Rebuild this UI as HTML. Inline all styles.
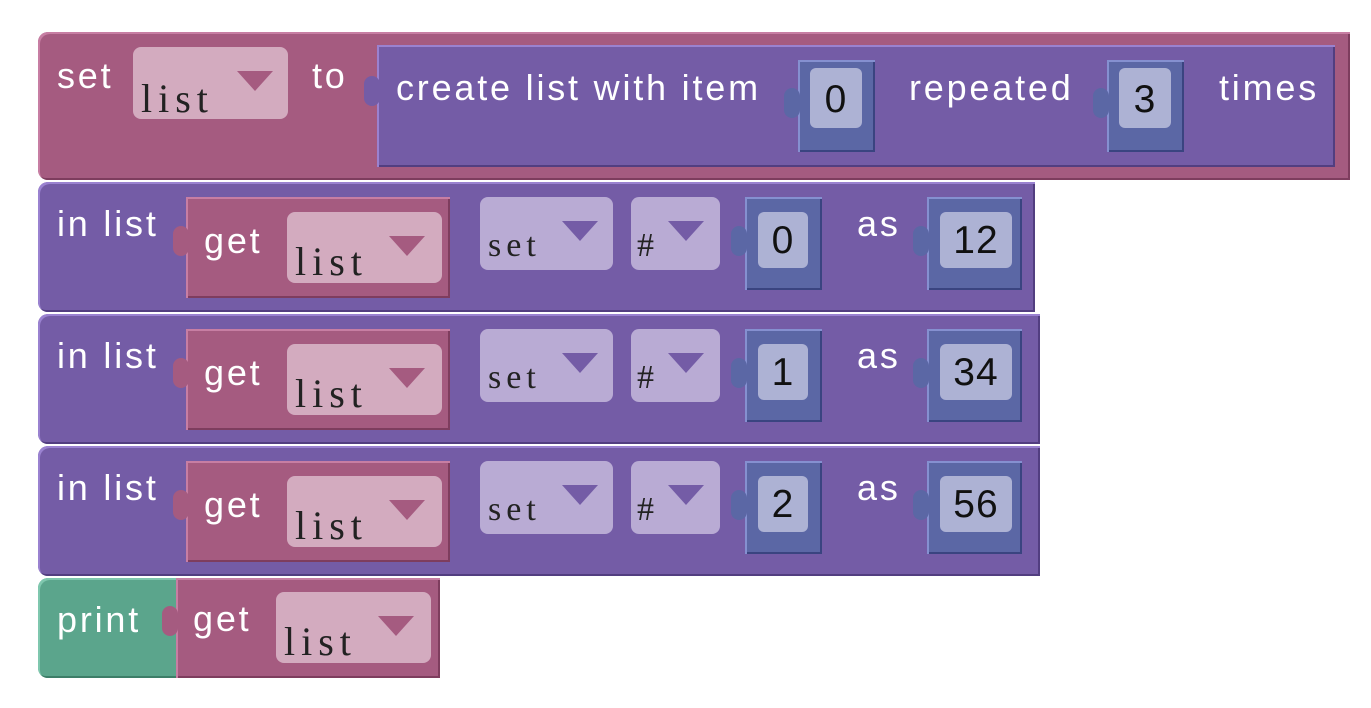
<!DOCTYPE html>
<html><head><meta charset="utf-8"><style>
body{margin:0;width:1371px;height:708px;background:#fff;position:relative;overflow:hidden;font-family:"Liberation Sans",sans-serif}
div,span{position:absolute;box-sizing:border-box}
.pk{background:#a55b80;box-shadow:inset 2px 2px 0 #c77ea3,inset -2px -2px 0 #7e3d5e}
.pu{background:#745ca6;box-shadow:inset 2px 2px 0 #9a82d0,inset -2px -2px 0 #523e80}
.gr{background:#5ba58c;box-shadow:inset 2px 2px 0 #7fc7ae,inset -2px -2px 0 #3d7e68}
.nb{background:#5b67a5;box-shadow:inset 2px 2px 0 #8590d0,inset -2px -2px 0 #3a4480}
.ni{background:#adb2d4;border-radius:6px}
.dp{background:#d3abbf;border-radius:8px}
.dv{background:#b9abd4;border-radius:8px}
.t{color:#fff;font-size:36px;letter-spacing:2.8px;line-height:1;white-space:nowrap}
.n{color:#111;font-size:39px;line-height:1;text-align:center;width:100%;letter-spacing:1px}
.s{font-family:"Liberation Serif",serif;font-size:40px;color:#222;letter-spacing:6px;line-height:1}
.tri{width:0;height:0;border-left:18px solid transparent;border-right:18px solid transparent;border-top:20px solid #a55b80}
.trv{width:0;height:0;border-left:18px solid transparent;border-right:18px solid transparent;border-top:20px solid #745ca6}
.tab{width:16px;height:30px;border-radius:8px}
</style></head><body>

<!-- set block -->
<div class="pk" style="left:38px;top:32px;width:1312px;height:148px;border-radius:10px 0 0 10px"></div>
<span class="t" style="left:57px;top:58px">set</span>
<div class="dp" style="left:133px;top:47px;width:155px;height:72px"><span class="s" style="left:8px;top:32px">list</span><div class="tri" style="left:104px;top:24px"></div></div>
<span class="t" style="left:312px;top:58px">to</span>
<div class="pu" style="left:377px;top:45px;width:958px;height:122px"></div>
<div class="tab" style="left:364px;top:76px;background:#745ca6"></div>
<span class="t" style="left:396px;top:70px">create list with item</span>
<div class="nb" style="left:798px;top:60px;width:77px;height:92px"><div class="ni" style="left:12px;top:8px;width:52px;height:60px"><span class="n" style="top:12px">0</span></div></div>
<div class="tab" style="left:784px;top:88px;background:#5b67a5"></div>
<span class="t" style="left:909px;top:70px">repeated</span>
<div class="nb" style="left:1107px;top:60px;width:77px;height:92px"><div class="ni" style="left:12px;top:8px;width:52px;height:60px"><span class="n" style="top:12px">3</span></div></div>
<div class="tab" style="left:1093px;top:88px;background:#5b67a5"></div>
<span class="t" style="left:1219px;top:70px">times</span>

<!-- row 1 -->
<div class="pu" style="left:38px;top:182px;width:997px;height:130px;border-radius:10px 0 0 10px"></div>
<span class="t" style="left:57px;top:206px">in list</span>
<div class="pk" style="left:186px;top:197px;width:264px;height:101px"></div>
<div class="tab" style="left:173px;top:226px;background:#a55b80"></div>
<span class="t" style="left:204px;top:223px">get</span>
<div class="dp" style="left:287px;top:212px;width:155px;height:71px"><span class="s" style="left:8px;top:30px">list</span><div class="tri" style="left:102px;top:24px"></div></div>
<div class="dv" style="left:480px;top:197px;width:133px;height:73px"><span class="s" style="left:8px;top:32px;font-size:34px;letter-spacing:5px">set</span><div class="trv" style="left:82px;top:24px"></div></div>
<div class="dv" style="left:631px;top:197px;width:89px;height:73px"><span class="s" style="left:6px;top:32px;font-size:34px">#</span><div class="trv" style="left:37px;top:24px"></div></div>
<div class="nb" style="left:745px;top:197px;width:77px;height:93px"><div class="ni" style="left:13px;top:15px;width:50px;height:56px"><span class="n" style="top:9px">0</span></div></div>
<div class="tab" style="left:731px;top:226px;background:#5b67a5"></div>
<span class="t" style="left:857px;top:206px">as</span>
<div class="nb" style="left:927px;top:197px;width:95px;height:93px"><div class="ni" style="left:13px;top:15px;width:72px;height:56px"><span class="n" style="top:9px">12</span></div></div>
<div class="tab" style="left:913px;top:226px;background:#5b67a5"></div>

<!-- row 2 -->
<div class="pu" style="left:38px;top:314px;width:1002px;height:130px;border-radius:10px 0 0 10px"></div>
<span class="t" style="left:57px;top:338px">in list</span>
<div class="pk" style="left:186px;top:329px;width:264px;height:101px"></div>
<div class="tab" style="left:173px;top:358px;background:#a55b80"></div>
<span class="t" style="left:204px;top:355px">get</span>
<div class="dp" style="left:287px;top:344px;width:155px;height:71px"><span class="s" style="left:8px;top:30px">list</span><div class="tri" style="left:102px;top:24px"></div></div>
<div class="dv" style="left:480px;top:329px;width:133px;height:73px"><span class="s" style="left:8px;top:32px;font-size:34px;letter-spacing:5px">set</span><div class="trv" style="left:82px;top:24px"></div></div>
<div class="dv" style="left:631px;top:329px;width:89px;height:73px"><span class="s" style="left:6px;top:32px;font-size:34px">#</span><div class="trv" style="left:37px;top:24px"></div></div>
<div class="nb" style="left:745px;top:329px;width:77px;height:93px"><div class="ni" style="left:13px;top:15px;width:50px;height:56px"><span class="n" style="top:9px">1</span></div></div>
<div class="tab" style="left:731px;top:358px;background:#5b67a5"></div>
<span class="t" style="left:857px;top:338px">as</span>
<div class="nb" style="left:927px;top:329px;width:95px;height:93px"><div class="ni" style="left:13px;top:15px;width:72px;height:56px"><span class="n" style="top:9px">34</span></div></div>
<div class="tab" style="left:913px;top:358px;background:#5b67a5"></div>

<!-- row 3 -->
<div class="pu" style="left:38px;top:446px;width:1002px;height:130px;border-radius:10px 0 0 10px"></div>
<span class="t" style="left:57px;top:470px">in list</span>
<div class="pk" style="left:186px;top:461px;width:264px;height:101px"></div>
<div class="tab" style="left:173px;top:490px;background:#a55b80"></div>
<span class="t" style="left:204px;top:487px">get</span>
<div class="dp" style="left:287px;top:476px;width:155px;height:71px"><span class="s" style="left:8px;top:30px">list</span><div class="tri" style="left:102px;top:24px"></div></div>
<div class="dv" style="left:480px;top:461px;width:133px;height:73px"><span class="s" style="left:8px;top:32px;font-size:34px;letter-spacing:5px">set</span><div class="trv" style="left:82px;top:24px"></div></div>
<div class="dv" style="left:631px;top:461px;width:89px;height:73px"><span class="s" style="left:6px;top:32px;font-size:34px">#</span><div class="trv" style="left:37px;top:24px"></div></div>
<div class="nb" style="left:745px;top:461px;width:77px;height:93px"><div class="ni" style="left:13px;top:15px;width:50px;height:56px"><span class="n" style="top:9px">2</span></div></div>
<div class="tab" style="left:731px;top:490px;background:#5b67a5"></div>
<span class="t" style="left:857px;top:470px">as</span>
<div class="nb" style="left:927px;top:461px;width:95px;height:93px"><div class="ni" style="left:13px;top:15px;width:72px;height:56px"><span class="n" style="top:9px">56</span></div></div>
<div class="tab" style="left:913px;top:490px;background:#5b67a5"></div>

<!-- print -->
<div class="gr" style="left:38px;top:578px;width:140px;height:100px;border-radius:10px 0 0 10px"></div>
<span class="t" style="left:57px;top:602px">print</span>
<div class="pk" style="left:176px;top:578px;width:264px;height:100px"></div>
<div class="tab" style="left:162px;top:606px;background:#a55b80"></div>
<span class="t" style="left:193px;top:601px">get</span>
<div class="dp" style="left:276px;top:592px;width:155px;height:71px"><span class="s" style="left:8px;top:30px">list</span><div class="tri" style="left:102px;top:24px"></div></div>

</body></html>
